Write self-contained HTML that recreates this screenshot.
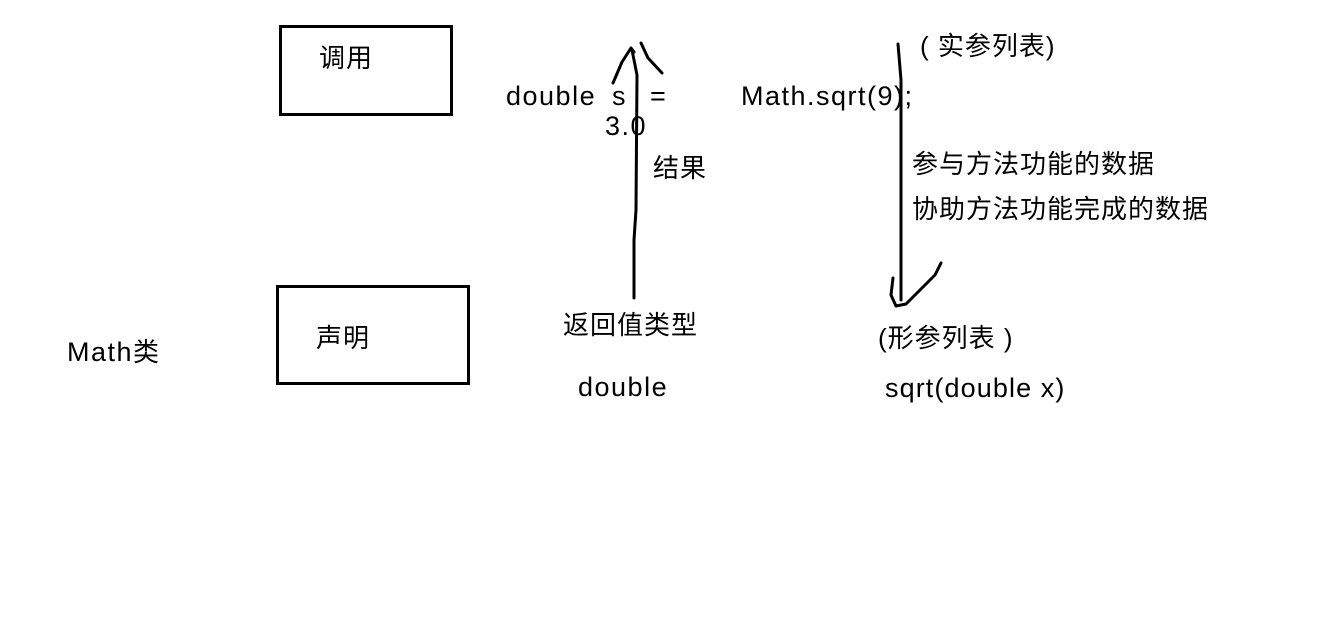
<!DOCTYPE html>
<html><head><meta charset="utf-8"><style>
body{margin:0;width:1334px;height:618px;background:#fff;position:relative;overflow:hidden;font-family:"Liberation Sans","Noto Sans CJK SC","Microsoft YaHei",sans-serif;color:#000}
.t{position:absolute;white-space:pre;line-height:1}
.c{font-size:26px;letter-spacing:1px}
.l{font-size:27px;letter-spacing:1.5px}
.b{position:absolute;border:3px solid #000;box-sizing:border-box}
</style></head><body>
<div class="b" style="left:279px;top:25px;width:174px;height:91px"></div>
<div class="b" style="left:276px;top:285px;width:194px;height:100px"></div>
<div class="t c" style="left:319px;top:45px">调用</div>
<div class="t c" style="left:316px;top:325px">声明</div>
<div class="t l" style="left:67px;top:339px">Math<span style="font-size:26px">类</span></div>
<div class="t l" style="left:506px;top:83px">double</div>
<div class="t l" style="left:612px;top:83px">s</div>
<div class="t l" style="left:650px;top:83px">=</div>
<div class="t l" style="left:741px;top:83px">Math.sqrt(9);</div>
<div class="t l" style="left:605px;top:113px">3.0</div>
<div class="t c" style="left:653px;top:155px">结果</div>
<div class="t c" style="left:920px;top:33px">( 实参列表)</div>
<div class="t c" style="left:912px;top:151px">参与方法功能的数据</div>
<div class="t c" style="left:912px;top:196px">协助方法功能完成的数据</div>
<div class="t c" style="left:563px;top:312px">返回值类型</div>
<div class="t c" style="left:878px;top:325px">(形参列表 )</div>
<div class="t l" style="left:578px;top:374px">double</div>
<div class="t l" style="left:885px;top:375px;letter-spacing:1.1px">sqrt(double x)</div>
<svg style="position:absolute;left:0;top:0" width="1334" height="618">
<g fill="none" stroke="#000" stroke-width="3" stroke-linecap="round" stroke-linejoin="round">
<path d="M634 298 L634 240 L636 210 L637 75 L632 50"/>
<path d="M613 83 L622 62 L631 48 L634 52"/>
<path d="M641 43 L648 58 L662 73"/>
<path d="M898 44 L901 80 L901 300"/>
<path d="M893 278 L891 295 L896 306 L906 304 L925 285 L935 275 L941 263"/>
</g></svg>
</body></html>
